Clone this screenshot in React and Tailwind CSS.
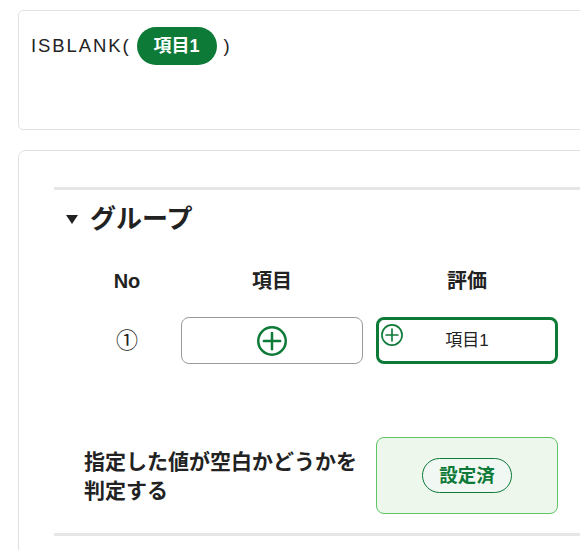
const GREEN = "#0d7a38";

const PlusCircle = ({size, stroke = 2}) => (
    <svg width={size} height={size} viewBox="0 0 24 24" fill="none">
        <circle cx="12" cy="12" r="11" stroke={GREEN} strokeWidth={stroke} />
        <path d="M12 5.5v13M5.5 12h13" stroke={GREEN} strokeWidth={stroke} strokeLinecap="round" />
    </svg>
);

const FormulaCard = () => {
    return (
        <div className="ml-[18px] mt-[10px] h-[120px] w-[600px] rounded-[5px] border border-[#e3e3e3] bg-white pl-[12px] pt-[16px]">
            <div className="flex items-center text-[18.5px] tracking-[1.9px] text-[#222]">
                <span>ISBLANK(</span>
                <span className="ml-[6px] mr-[7px] flex h-[38px] w-[80px] items-center justify-center rounded-full bg-[#0d7a38] text-[18px] font-bold tracking-normal text-white">
                    項目1
                </span>
                <span>)</span>
            </div>
        </div>
    );
};

const GroupCard = () => {
    return (
        <div className="ml-[18px] mt-[20px] w-[600px] rounded-t-[8px] border border-[#e0e0e0] bg-white pl-[35px] pt-[36px] pb-[20px]">
            <div className="border-t-[3px] border-[#e6e6e6]" />
            <div className="mt-[11px] flex h-[36px] items-center pl-[12px]">
                <svg width="12" height="9" viewBox="0 0 12 9">
                    <path d="M0 0h12L6 9z" fill="#222" />
                </svg>
                <span className="ml-[12px] text-[26px] font-bold text-[#222]">グループ</span>
            </div>

            <div className="mt-[30px] grid grid-cols-[82px_182px_182px] gap-x-[13px] pl-[32px] text-[#222]">
                <div className="text-center text-[20px] font-bold leading-[28px]">No</div>
                <div className="text-center text-[20px] font-bold leading-[28px]">項目</div>
                <div className="text-center text-[20px] font-bold leading-[28px]">評価</div>

                <div className="mt-[22px] flex h-[47px] items-center justify-center text-[22px]">①</div>
                <div className="mt-[22px] flex h-[47px] items-center justify-center rounded-[8px] border border-[#9a9a9a]">
                    <PlusCircle size={30} stroke={2} />
                </div>
                <div className="relative mt-[22px] flex h-[47px] items-center justify-center rounded-[8px] border-[3px] border-[#0d7a38] text-[17px]">
                    <span className="absolute left-[2px] top-[4px] flex">
                        <PlusCircle size={22} stroke={1.8} />
                    </span>
                    項目1
                </div>

                <div className="col-span-2 mt-[73px] flex items-center">
                    <p className="-ml-[2px] text-[21px] font-bold leading-[29px]">
                        指定した値が空白かどうかを
                        <br />
                        判定する
                    </p>
                </div>
                <div className="mt-[73px] flex h-[77px] items-center justify-center rounded-[8px] border border-[#5fc464] bg-[#edf7ec]">
                    <span className="flex h-[35px] w-[90px] items-center justify-center rounded-full border-[1.5px] border-[#0d7a38] bg-[#f1f8f4] text-[18.5px] font-bold text-[#0d7a38]">
                        設定済
                    </span>
                </div>
            </div>

            <div className="mt-[19px] border-t-[3px] border-[#e6e6e6]" />
        </div>
    );
};

const App = () => {
    return (
        <div className="h-[550px] w-[580px] overflow-hidden bg-white font-['Liberation_Sans','Noto_Sans_CJK_JP',sans-serif]">
            <FormulaCard />
            <GroupCard />
        </div>
    );
};

export default App;
